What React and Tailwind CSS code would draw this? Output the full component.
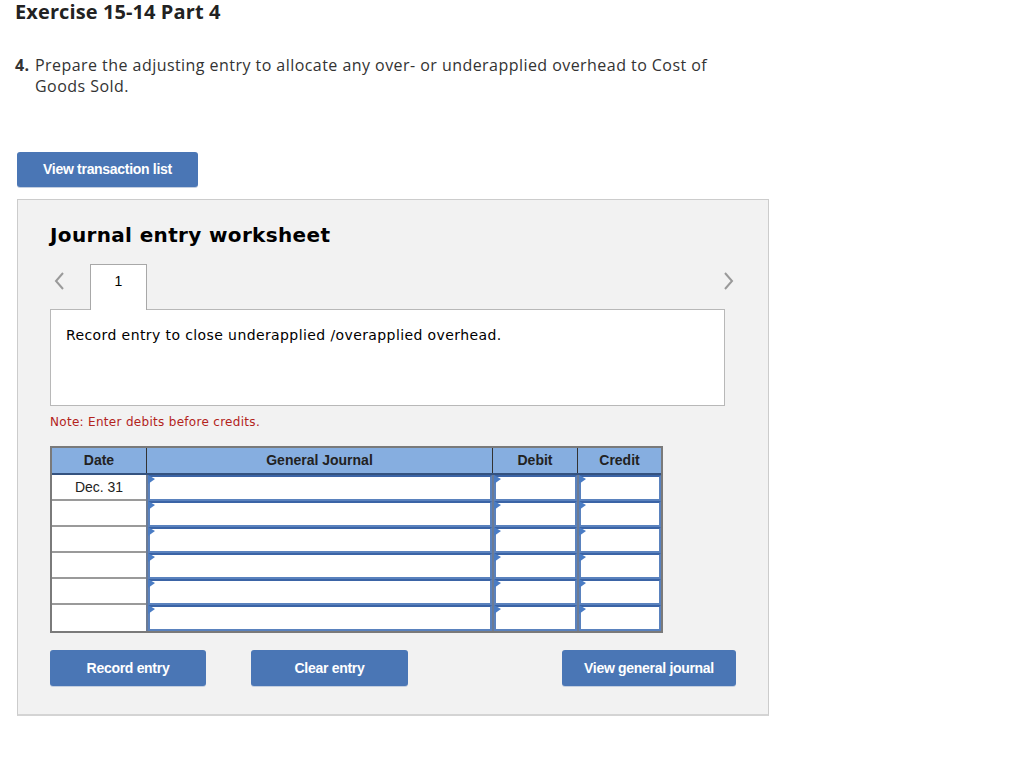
import React from 'react';

const rows = ['Dec. 31', '', '', '', '', ''];

function Marker() {
  return (
    <svg className="absolute left-0 top-0" width="7" height="10" viewBox="0 0 7 10">
      <polygon points="0,0 7,4 0,9" fill="#4a7cc4" />
    </svg>
  );
}

function InputCell() {
  return (
    <div className="relative h-[26px] border-l-2 border-[#6b7b95]">
      <div className="h-full border-2 border-t-[#3b64a6] border-x-[#5a82be] border-b-[#5a82be] bg-white" />
      <Marker />
    </div>
  );
}

function Button({ children, className }) {
  return (
    <button
      className={
        'h-9 rounded-[3px] bg-[#4a76b5] text-[14px] font-bold text-white shadow-[0_1px_0_#c4cfe0] ' +
        className
      }
      style={{ fontFamily: '"Liberation Sans", Arial, sans-serif', letterSpacing: '-0.3px' }}
    >
      {children}
    </button>
  );
}

export default function App() {
  return (
    <div className="min-h-[760px] w-[1024px] bg-white text-[#222]">
      <h1
        className="pl-[15px] pt-[1px] text-[20px] font-bold leading-[22px] text-[#222]"
        style={{ fontFamily: '"Open Sans", Lato, sans-serif', letterSpacing: '0.1px' }}
      >
        Exercise 15-14 Part 4
      </h1>

      <div
        className="mt-[32px] flex pl-[15px] text-[16px] leading-[21px] text-[#333]"
        style={{ fontFamily: '"Open Sans", Lato, sans-serif', letterSpacing: '0.45px' }}
      >
        <span className="w-[20px] shrink-0 font-bold">4.</span>
        <p className="w-[690px]">
          Prepare the adjusting entry to allocate any over- or underapplied overhead to Cost of Goods Sold.
        </p>
      </div>

      <div className="ml-[17px] mt-[55px]">
        <Button className="w-[181px] h-[35px]">View transaction list</Button>
      </div>

      {/* worksheet panel */}
      <div className="ml-[17px] mt-[12px] w-[752px] border border-[#cccccc] border-b-2 border-b-[#d4d4d4] bg-[#f2f2f2] pb-[28px] pl-[32px] pt-[23px]">
        <h2
          className="text-[20px] font-bold leading-[24px] text-black"
          style={{ fontFamily: '"DejaVu Sans", Verdana, sans-serif', letterSpacing: '0.35px' }}
        >
          Journal entry worksheet
        </h2>

        <div className="mt-[17px] flex h-[45px] w-[685px] items-start">
          <div className="flex h-[34px] w-[40px] items-center pl-[3px]">
            <svg width="12" height="20" viewBox="0 0 12 20">
              <polyline points="10,2 3,10 10,18" fill="none" stroke="#9a9a9a" strokeWidth="2" />
            </svg>
          </div>
          <div
            className="relative z-10 flex h-[46px] w-[57px] justify-center border border-b-0 border-[#a8a8a8] bg-white pt-[7px] text-[14px] leading-[18px] text-black"
            style={{ fontFamily: '"Liberation Sans", Arial, sans-serif' }}
          >
            1
          </div>
          <div className="flex-1" />
          <div className="flex h-[34px] items-center">
            <svg width="12" height="20" viewBox="0 0 12 20">
              <polyline points="2,2 9,10 2,18" fill="none" stroke="#9a9a9a" strokeWidth="2" />
            </svg>
          </div>
        </div>

        <div
          className="h-[97px] w-[675px] border border-[#b8b8b8] bg-white pl-[15px] pt-[16px] text-[14px] leading-[18px] text-black"
          style={{ fontFamily: '"DejaVu Sans", Verdana, sans-serif', letterSpacing: '0.4px' }}
        >
          Record entry to close underapplied /overapplied overhead.
        </div>

        <p
          className="mt-[8px] text-[12px] leading-[16px] text-[#b3231c]"
          style={{ fontFamily: '"DejaVu Sans", Verdana, sans-serif', letterSpacing: '0.3px' }}
        >
          Note: Enter debits before credits.
        </p>

        {/* journal table */}
        <div
          className="mt-[16px] w-[613px] border-2 border-[#7a7a7a] text-[14px]"
          style={{ fontFamily: '"Liberation Sans", Arial, sans-serif' }}
        >
          <div className="grid h-[27px] grid-cols-[94px_346px_85px_84px] border-b-2 border-[#34527f] bg-[#86aee0] font-bold text-[#222]">
            <div className="flex items-center justify-center">Date</div>
            <div className="flex items-center justify-center border-l border-[#333]">General Journal</div>
            <div className="flex items-center justify-center border-l border-[#333]">Debit</div>
            <div className="flex items-center justify-center border-l border-[#333]">Credit</div>
          </div>
          {rows.map((d, i) => (
            <div key={i} className="grid grid-cols-[94px_346px_85px_84px]">
              <div
                className={
                  'flex h-[26px] items-center justify-center bg-white text-[#222] ' +
                  (i < rows.length - 1 ? 'border-b-2 border-[#9a9a9a]' : '')
                }
              >
                {d}
              </div>
              <InputCell />
              <InputCell />
              <InputCell />
            </div>
          ))}
        </div>

        <div className="mt-[17px] flex w-[686px] items-start">
          <Button className="w-[156px]">Record entry</Button>
          <Button className="ml-[45px] w-[157px]">Clear entry</Button>
          <div className="flex-1" />
          <Button className="w-[174px]">View general journal</Button>
        </div>
      </div>
    </div>
  );
}
